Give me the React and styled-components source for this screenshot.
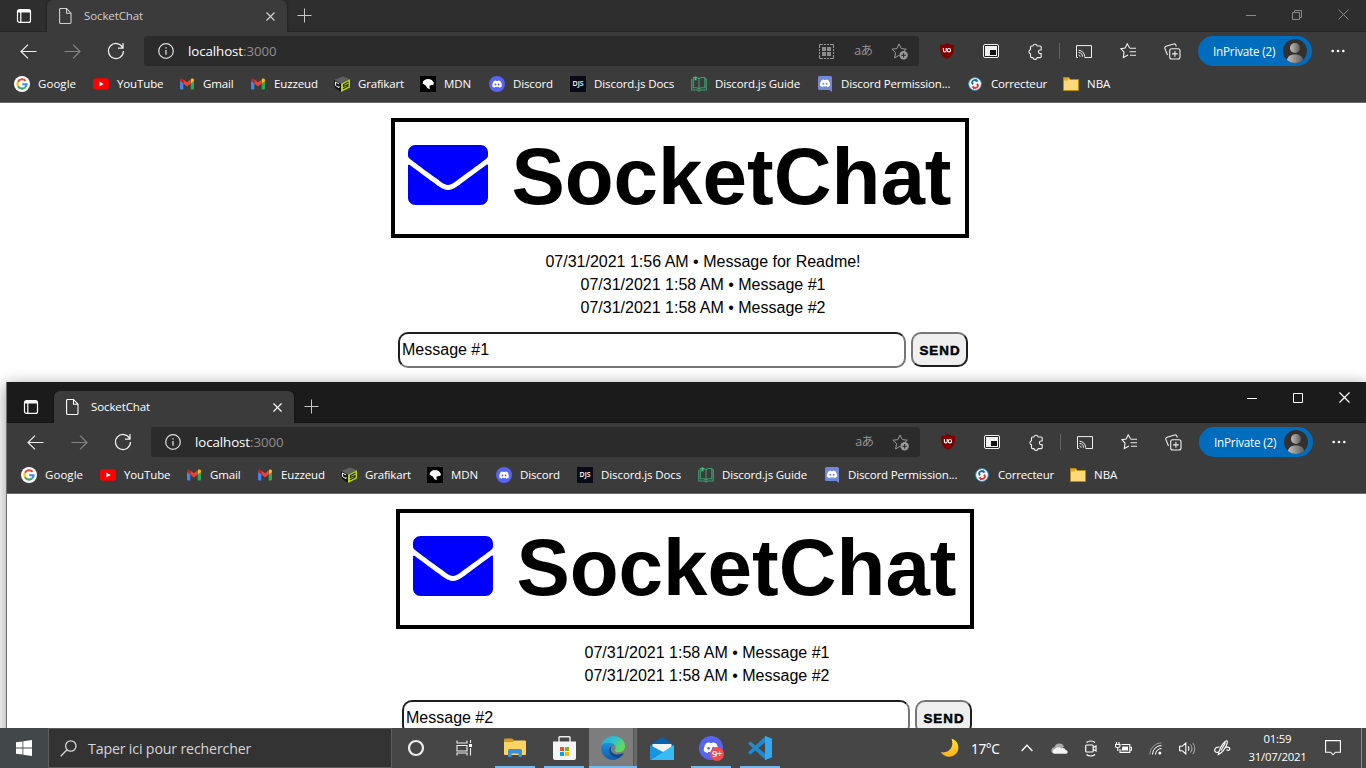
import React from "react";
import styled, { createGlobalStyle, css } from "styled-components";

const GlobalStyle = createGlobalStyle`
  * { box-sizing: border-box; }
  body { margin: 0; background: #fff; overflow: hidden; }
  svg { display: block; flex: none; }
`;

const uiFont = css`
  font-family: "Open Sans", "Noto Sans", "Noto Sans CJK JP", sans-serif;
`;

/* ---------- desktop ---------- */

const Desktop = styled.div`
  position: relative;
  width: 1366px;
  height: 768px;
  overflow: hidden;
  background: #fff;
`;

const Window = styled.section`
  position: absolute;
  left: ${(p) => p.$x}px;
  top: ${(p) => p.$y}px;
  width: ${(p) => p.$w}px;
  height: 768px;
  display: flex;
  flex-direction: column;
  background: #fff;
  ${(p) =>
    p.$floating &&
    css`
      border-left: 1px solid #6f6f6f;
      box-shadow: 0 3px 15px rgba(0, 0, 0, 0.42);
    `}
`;

/* ---------- browser chrome ---------- */

const TabStrip = styled.div`
  ${uiFont}
  display: flex;
  align-items: flex-end;
  height: ${(p) => (p.$floating ? 41 : 32)}px;
  background: ${(p) => (p.$floating ? "#1b1b1b" : "#2e2e2e")};
  border-bottom: 1px solid ${(p) => (p.$floating ? "#151515" : "#262626")};
  flex: none;
`;

const StripButton = styled.div`
  display: flex;
  align-items: center;
  justify-content: center;
  width: ${(p) => p.$w}px;
  height: 31px;
`;

const Tab = styled.div`
  display: flex;
  align-items: center;
  width: 240px;
  height: 32px;
  margin-bottom: -1px;
  padding: 0 12px;
  border-radius: 6px 6px 0 0;
  background: #3b3b3b;
  box-shadow: 0 0 3px rgba(0, 0, 0, 0.5);
  clip-path: inset(0 -4px 0 -4px);
  color: ${(p) => (p.$active ? "#fff" : "#d0d0d0")};
`;

const TabTitle = styled.span`
  flex: 1;
  margin-left: 12px;
  font-size: 11.5px;
  line-height: 16px;
  letter-spacing: -0.1px;
`;

const WindowControls = styled.div`
  display: flex;
  align-self: flex-start;
  margin-left: auto;
  color: ${(p) => (p.$active ? "#fff" : "#8a8a8a")};
`;

const ControlButton = styled.div`
  display: flex;
  align-items: center;
  justify-content: center;
  width: 46px;
  height: ${(p) => (p.$active ? 31 : 29)}px;
`;

const Toolbar = styled.div`
  ${uiFont}
  display: flex;
  align-items: center;
  height: 38px;
  padding: 0 6px;
  background: #3b3b3b;
  color: #f0f0f0;
  flex: none;
`;

const Slot = styled.div`
  display: flex;
  align-items: center;
  justify-content: center;
  width: 44px;
  height: 30px;
  color: ${(p) => (p.$dim ? "#858585" : "inherit")};
`;

const AddressBar = styled.div`
  display: flex;
  align-items: center;
  flex: 1;
  height: 30px;
  margin: 0 6px;
  padding: 0 1px 0 14px;
  border-radius: 3px;
  background: #2b2b2b;
`;

const Url = styled.span`
  flex: 1;
  margin-left: 14px;
  font-size: 13.3px;
  line-height: 20px;
  letter-spacing: -0.08px;
  color: #8e8e8e;

  b {
    font-weight: 400;
    color: #fff;
  }
`;

const AddressAction = styled.div`
  display: flex;
  align-items: center;
  justify-content: center;
  width: 36.5px;
  font-size: 12.5px;
  line-height: 18px;
  letter-spacing: -0.8px;
  color: #929292;
`;

const Divider = styled.div`
  width: 1px;
  height: 16px;
  margin: 0 2px;
  background: #636363;
`;

const ProfilePill = styled.div`
  display: flex;
  align-items: center;
  justify-content: space-between;
  width: 114px;
  height: 30px;
  margin: 0 4px;
  padding: 0 5px 0 15px;
  border-radius: 15px;
  background: #006cbe;
  color: #fff;
  font-size: 11.7px;
  letter-spacing: -0.2px;
  white-space: nowrap;
`;

const BookmarkBar = styled.div`
  ${uiFont}
  display: flex;
  align-items: center;
  height: 33px;
  padding: 0 0 4px 14px;
  background: #3b3b3b;
  border-bottom: 1px solid #6b6b6b;
  color: #fff;
  flex: none;
`;

const Bookmark = styled.div`
  display: flex;
  align-items: center;
  gap: 8px;
  width: ${(p) => p.$w}px;
  font-size: 11.5px;
  line-height: 16px;
  letter-spacing: ${(p) => p.$ls ?? -0.13}px;
  white-space: nowrap;
`;

/* ---------- chat page ---------- */

const Page = styled.main`
  display: flex;
  flex-direction: column;
  align-items: center;
  padding-top: 15px;
  font-family: "Liberation Sans", Arial, sans-serif;
  color: #000;
`;

const Logo = styled.h1`
  display: flex;
  align-items: flex-start;
  width: 578px;
  height: 120px;
  margin: 0 ${(p) => p.$shift}px 12px 0;
  padding: 9px 0 0 13.4px;
  border: 4px solid #000;
  font-size: 80px;
  line-height: 92px;
  font-weight: 700;

  svg {
    margin: 14px 23px 0 0;
  }
`;

const Messages = styled.ul`
  margin: 0 0 13px;
  padding: 0 0 0 40px;
  list-style: none;
  text-align: center;
  font-size: 16px;
  line-height: 23px;
`;

const Form = styled.form`
  display: flex;
  align-items: flex-start;
  gap: 5px;
`;

const Input = styled.input`
  width: 508px;
  height: 36px;
  padding: 1px 2px;
  border: 2px solid;
  border-color: #1e1e1e #767676 #767676 #1e1e1e;
  border-radius: 10px;
  outline: none;
  background: #fff;
  color: #000;
  font: 16px "Liberation Sans", Arial, sans-serif;
`;

const SendButton = styled.button`
  width: 57px;
  height: 35px;
  padding: 1px 0 0 1px;
  border: 2px solid;
  border-color: #767676 #1e1e1e #1e1e1e #767676;
  border-radius: 10px;
  background: #efefef;
  color: #000;
  font: 700 13.333px "Liberation Sans", Arial, sans-serif;
  letter-spacing: 1px;
  -webkit-text-stroke: 0.5px #000;
`;

/* ---------- taskbar ---------- */

const Taskbar = styled.footer`
  ${uiFont}
  position: absolute;
  left: 0;
  right: 0;
  bottom: 0;
  display: flex;
  height: 40px;
  background: #464646;
  color: #fff;
`;

const StartButton = styled.div`
  display: flex;
  align-items: center;
  justify-content: center;
  width: 48px;
  background: #42474a;
`;

const SearchBox = styled.div`
  display: flex;
  align-items: center;
  gap: 11px;
  width: 344px;
  padding-left: 11px;
  border: 1px solid #5c5c5c;
  background: #333;
  color: #d6d6d6;
  font-size: 14.2px;
  letter-spacing: -0.16px;
`;

const TaskSlot = styled.div`
  display: flex;
  align-items: center;
  justify-content: center;
  width: 48px;
`;

const Apps = styled.div`
  display: flex;
  gap: 1px;
  margin-left: 3px;
`;

const AppButton = styled.div`
  position: relative;
  display: flex;
  align-items: center;
  justify-content: center;
  width: 48px;
  padding-right: ${(p) => (p.$active ? 1 : 0)}px;
  background: ${(p) => (p.$active ? "linear-gradient(90deg, #7d7d7d 44px, #555 44px, #555 45px, #696969 45px)" : "none")};

  &::after {
    content: "";
    display: ${(p) => (p.$open ? "block" : "none")};
    position: absolute;
    bottom: 0;
    left: ${(p) => (p.$active ? 0 : 4)}px;
    right: ${(p) => (p.$active ? 0 : 4)}px;
    height: 2px;
    background: #76b9ed;
  }
`;

const Badge = styled.span`
  position: absolute;
  right: 11px;
  top: 19px;
  width: 14px;
  height: 14px;
  border-radius: 50%;
  background: #ed4c50;
  font-size: 9.5px;
  font-weight: 600;
  line-height: 13px;
  letter-spacing: -0.5px;
  text-align: center;
`;

const Tray = styled.div`
  display: flex;
  align-items: center;
  margin-left: auto;
`;

const Weather = styled.div`
  display: flex;
  align-items: center;
  gap: 10px;
  width: 71px;
  font-family: "Noto Sans", sans-serif;
  font-size: 13.6px;
  letter-spacing: -0.4px;
`;

const TrayItem = styled.div`
  display: flex;
  align-items: center;
  justify-content: center;
  width: ${(p) => p.$w || 32}px;
`;

const Clock = styled.div`
  width: 73px;
  text-align: center;
  font-size: 11.4px;
  line-height: 18px;
  letter-spacing: -0.25px;
`;

const ShowDesktop = styled.div`
  width: 5px;
  height: 40px;
  margin-left: 9px;
  border-left: 1px solid #8a8a8a;
`;

/* ---------- icons ---------- */

const Line = ({ size = 16, w = size, h = size, sw = 1, children, ...rest }) => (
  <svg width={w} height={h} viewBox={`0 0 ${w} ${h}`} fill="none" stroke="currentColor" strokeWidth={sw} {...rest}>
    {children}
  </svg>
);

const TabActionsIcon = () => (
  <Line color="#fff">
    <rect x="1.5" y="1.6" width="13" height="12.8" rx="2" strokeWidth="1.2" />
    <path d="M4.8 4v10.4" strokeWidth="1.2" />
    <path d="M2 3.2h12" strokeWidth="2.6" />
  </Line>
);
const PageIcon = () => (
  <Line w={13} h={16}>
    <path d="M1.5.5h6l4.500 4.600v9.200a1.200 1.200 0 0 1-1.200 1.200H1.800A1.200 1.200 0 0 1 .6 14.300V1.500a1 1 0 0 1 .9-1zM7.500.8v4.500h4.300" strokeWidth="1.100" />
  </Line>
);
const CrossIcon = ({ size = 9, sw = 1.2 }) => (
  <Line size={size} sw={sw}>
    <path d={`M.5.5l${size - 1} ${size - 1}M${size - 0.5}.5l-${size - 1} ${size - 1}`} />
  </Line>
);
const PlusIcon = () => (
  <Line size={15} color="#c8c8c8"><path d="M7.500.5v14M.5 7.500h14" /></Line>
);
const ArrowIcon = ({ flip }) => (
  <Line w={17} h={15} sw="1.15" transform={flip ? "scale(-1 1)" : undefined}>
    <path d="M16.500 7.500H1M8 .7L1 7.500l7 6.800" />
  </Line>
);
const ReloadIcon = () => (
  <Line size={18} sw="1.25"><path d="M15.600 5.400A7.500 7.500 0 1 0 16.500 9M16 1v5h-5" /></Line>
);
const InfoIcon = () => (
  <Line sw="1.2" color="#ddd">
    <circle cx="8" cy="8" r="7.300" />
    <path d="M8 7v4.800M8 4.200v1.400" strokeWidth="1.300" />
  </Line>
);
const QrIcon = () => (
  <Line size={15} color="#999">
    <path d="M.5 4V.5H4M11 .5h3.500V4M14.500 11v3.500H11M4 14.500H.5V11" />
    <path d="M3 3h4v4H3zM8 3h4v4H8zM3 8h4v4H3zM8 8h4v4H8z" fill="#8c8c8c" stroke="none" />
    <path d="M5 .5h5M5 14.500h5M.5 5v5M14.500 5v5" strokeDasharray="2 1" />
  </Line>
);
const StarAddIcon = () => (
  <Line w={18} h={17} color="#999">
    <path d="M12.500 8.600l2.800-2.400-5-.6L8 .9 5.900 5.600l-5 .6 3.700 3.500-1 5.300L8 12.300" />
    <circle cx="12.600" cy="12.300" r="4.200" fill="#999" stroke="none" />
    <path d="M12.600 10v4.600M10.300 12.300h4.600" stroke="#2b2b2b" />
  </Line>
);
const ShieldIcon = () => (
  <svg width="14" height="16" viewBox="0 0 14 16">
    <path d="M7 0c2 1.300 4.200 1.900 7 1.900 0 7.500-.6 10.600-7 14.100C.6 12.500 0 9.400 0 1.900 2.800 1.900 5 1.300 7 0z" fill="#800000" />
    <path d="M3.400 5v2.500a1.400 1.400 0 0 0 2.800 0V5" fill="none" stroke="#fff" strokeWidth="1.100" />
    <circle cx="8.900" cy="7.200" r="1.700" fill="none" stroke="#fff" strokeWidth="1.100" />
  </svg>
);
const PipIcon = () => (
  <svg width="16" height="14" viewBox="0 0 16 14">
    <rect x=".5" y=".5" width="15" height="13" rx="1.500" fill="#222" stroke="#f0f0f0" />
    <rect x="2" y="2" width="12" height="10" fill="#f0f0f0" />
    <rect x="7" y="6" width="6" height="5" fill="#111" />
  </svg>
);
const PuzzleIcon = () => (
  <Line w={16} h={17} sw="1.100">
    <path d="M4.500 3h1.400a2.200 2.200 0 0 1 4.300 0h3a1 1 0 0 1 1 1v3h-1a1.800 1.800 0 0 0 0 3.600h1v3a1 1 0 0 1-1 1h-3a2.200 2.200 0 0 1-4.300 0H4.500a1 1 0 0 1-1-1v-2.900a2 2 0 0 1 0-3.900V4a1 1 0 0 1 1-1z" />
  </Line>
);
const CastIcon = () => (
  <Line w={16} h={13}>
    <path d="M.5 12.500V.6h15v11.900H8.500M.5 12.500H2" />
    <path d="M2.500 5.200a6.500 6.500 0 0 1 6.200 6.500M2.500 7.500a4.200 4.200 0 0 1 4 4.200M2.500 9.900a2 2 0 0 1 1.700 1.800" />
  </Line>
);
const FavoritesIcon = () => (
  <Line w={17} h={16} sw="1.100">
    <path d="M9.500 4.700L7.200.8 5.200 5 .9 5.700 4 9l-.7 5.600L8 12M9.500 5.200H16M9.500 8.700H16M10 12.200h6" />
  </Line>
);
const CollectionsIcon = () => (
  <Line w={17} h={17} sw="1.100">
    <rect x="5.700" y="5.700" width="10.300" height="10.300" rx="2" />
    <path d="M10.900 8v5.700M8 10.900h5.700M12.300 3.500l-.4-1.400a1.800 1.800 0 0 0-2.300-1L2 3.300A1.800 1.800 0 0 0 .9 5.600L3.500 12" />
  </Line>
);
const DotsIcon = () => (
  <svg width="14" height="4" viewBox="0 0 14 4" fill="#fff">
    <circle cx="1.700" cy="2" r="1.300" /><circle cx="7" cy="2" r="1.300" /><circle cx="12.300" cy="2" r="1.300" />
  </svg>
);
const Avatar = () => (
  <svg width="24" height="24" viewBox="0 0 24 24">
    <defs>
      <linearGradient id="person"><stop offset="0" stopColor="#c4c2c0" /><stop offset="1" stopColor="#5d5a58" /></linearGradient>
      <clipPath id="disc"><circle cx="12" cy="12" r="12" /></clipPath>
    </defs>
    <circle cx="12" cy="12" r="12" fill="#323130" />
    <g clipPath="url(#disc)" fill="url(#person)">
      <circle cx="12" cy="9" r="5" />
      <path d="M3.500 24c0-6 3-8.500 8.500-8.500s8.500 2 8.500 8.500z" />
    </g>
  </svg>
);
const MinimizeIcon = () => <Line size={10}><path d="M0 5.500h10" /></Line>;
const MaximizeIcon = () => <Line size={10}><path d="M.5.5h9v9h-9z" /></Line>;
const RestoreIcon = () => <Line size={10}><path d="M.5 2.500h7v7h-7zM2.500 2.500v-2h7v7h-2" /></Line>;

/* bookmark favicons */
const GoogleIcon = () => (
  <svg width="16" height="16" viewBox="0 0 16 16">
    <circle cx="8" cy="8" r="8" fill="#fff" />
    <g fill="none" strokeWidth="2.100">
      <path d="M11.600 4.900A4.600 4.600 0 0 0 4 5.700" stroke="#ea4335" />
      <path d="M4 5.700a4.800 4.800 0 0 0 0 4.600" stroke="#fbbc05" />
      <path d="M4 10.300a4.600 4.600 0 0 0 7 1.200" stroke="#34a853" />
      <path d="M8.200 8.200h4.400a4.600 4.600 0 0 1-1.600 3.300" stroke="#4285f4" />
    </g>
  </svg>
);
const YouTubeIcon = () => (
  <svg width="16" height="16" viewBox="0 0 16 16">
    <rect y="2.300" width="16" height="11.400" rx="3" fill="#f00" /><path d="M6.400 5.600v4.800L10.600 8z" fill="#fff" />
  </svg>
);
const GmailIcon = () => (
  <svg width="16" height="16" viewBox="0 0 16 16">
    <path d="M1 4v8.500a1 1 0 0 0 1 1h2.300V7z" fill="#4285f4" />
    <path d="M15 4v8.500a1 1 0 0 1-1 1h-2.300V7z" fill="#34a853" />
    <path d="M11.700 3.800V7.600L15 5.100V4c0-1.700-1.800-2-2.700-1.200z" fill="#fbbc04" />
    <path d="M4.300 7.600V3.500L8 6.300l3.700-2.800v4.100L8 10.400z" fill="#ea4335" />
    <path d="M1 4v1.100l3.300 2.500V3.500l-.9-.7C2.500 2 1 2.600 1 4z" fill="#c5221f" />
  </svg>
);
const GrafikartIcon = () => (
  <svg width="16" height="16" viewBox="0 0 16 16">
    <path d="M0 4L9 .5l7 2.700-9 4.600z" fill="#606060" /><path d="M0 4l7 3.800V16l-6-4z" fill="#151515" />
    <path d="M7 7.800l9-4.600v8.300L7 16z" fill="#b6d60b" />
    <path d="M1.200 6l4 2M1.500 6v3.500l3.500 2.200v-1.700" stroke="#eee" fill="none" />
    <path d="M14.500 6l-5 2.500v2l4.500-2v1.700L9 12.800" stroke="#222" fill="none" strokeWidth="1.100" />
  </svg>
);
const MdnIcon = () => (
  <svg width="16" height="16" viewBox="0 0 16 16">
    <rect width="16" height="16" fill="#000" />
    <path d="M2.500 7.500l.8-2.600L6 3.200l3-.3 2.800 1.200 1.900 2.500v1.800l-2.700.8-1.600.6.400 3.400-2.300-1L5.700 9.500z" fill="#fff" />
  </svg>
);
const DiscordGlyph = ({ x = 0, y = 0, scale = 1 }) => (
  <path
    transform={`translate(${x} ${y}) scale(${scale})`}
    fillRule="evenodd"
    fill="#fff"
    d="M8.500 1A17 17 0 0 0 4 2.400C1.200 6.300.4 10.200.8 14a17 17 0 0 0 5.200 2.700l1.200-2c2.500.7 5.100.7 7.600 0l1.200 2A17 17 0 0 0 21.200 14c.5-4.500-.7-8.300-3.200-11.600A17 17 0 0 0 13.500 1l-.6 1.200a14 14 0 0 0-3.800 0zM7.600 7.700a2 2 0 1 1 0 4 2 2 0 0 1 0-4zm6.800 0a2 2 0 1 1 0 4 2 2 0 0 1 0-4z"
  />
);
const DiscordIcon = () => (
  <svg width="16" height="16" viewBox="0 0 16 16">
    <circle cx="8" cy="8" r="8" fill="#5865f2" /><DiscordGlyph x={3} y={4} scale={0.46} />
  </svg>
);
const DjsBadge = styled.span`
  width: 16px;
  height: 16px;
  background: #090a16;
  color: #fff;
  font-size: 7px;
  font-weight: 600;
  line-height: 16px;
  text-align: center;
  letter-spacing: -0.1px;
`;
const GuideIcon = () => (
  <svg width="16" height="16" viewBox="0 0 16 16" fill="none" stroke="#3f9a72" strokeWidth="1.100">
    <path d="M2.300 1.500v10.300H6l2 1.200 2-1.200h3.800V1.500H10L8 2.700 6 1.500zM8 2.700V13M.7 3v11h5.800l1.500 1 1.500-1h5.800V3H14" />
    <path d="M3.500.5h2v4.300l-1-.8-1 .8z" fill="#48c08c" stroke="none" />
  </svg>
);
const PermissionIcon = () => (
  <svg width="14" height="16" viewBox="0 0 14 16">
    <path d="M1.500 0h11A1.500 1.500 0 0 1 14 1.500V16l-2.700-2H1.500A1.500 1.500 0 0 1 0 12.500v-11A1.500 1.500 0 0 1 1.500 0z" fill="#7289da" />
    <DiscordGlyph x={1.6} y={3} scale={0.49} />
  </svg>
);
const CorrecteurIcon = () => (
  <svg width="14" height="14" viewBox="0 0 14 14">
    <circle cx="7" cy="7" r="6.400" fill="#fff" stroke="#2a83b5" strokeWidth="1" />
    <path d="M8.600 3.500A3 3 0 0 0 4.300 4.600a2 2 0 0 0 .9 2.500" stroke="#176fa5" strokeWidth="1.900" fill="none" />
    <path d="M5.400 10.500A3 3 0 0 0 9.700 9.400a2 2 0 0 0-.9-2.500" stroke="#e33333" strokeWidth="1.900" fill="none" />
    <path d="M8 1.700l2.700 2.500-3 1z" fill="#176fa5" /><path d="M6 12.300L3.300 9.800l3-1z" fill="#e33333" />
  </svg>
);
const FolderIcon = () => (
  <svg width="16" height="14" viewBox="0 0 16 14">
    <path d="M.5 13.500V.5H6l1 2h8.500v11z" fill="#ffd978" stroke="#b78a12" />
    <path d="M1 1h4.800L5 3.500H1z" fill="#e2ac22" />
  </svg>
);

/* page logo */
const EnvelopeIcon = () => (
  <svg width="80" height="60" viewBox="0 64 512 384" fill="#00f">
    <path d="M502.300 190.800c3.900-3.100 9.700-.2 9.700 4.700V400c0 26.500-21.500 48-48 48H48c-26.500 0-48-21.500-48-48V195.600c0-5 5.700-7.800 9.700-4.700 22.400 17.400 52.100 39.500 154.100 113.600 21.100 15.400 56.700 47.800 92.200 47.600 35.700.3 72-32.800 92.300-47.600 102-74.100 131.600-96.300 154-113.700zM256 320c23.200.4 56.600-29.200 73.400-41.400 132.700-96.300 142.800-104.700 173.400-128.700 5.800-4.500 9.200-11.500 9.200-18.900v-19c0-26.500-21.500-48-48-48H48c-26.500 0-48 21.500-48 48v19c0 7.400 3.400 14.300 9.200 18.900 30.600 23.900 40.700 32.400 173.400 128.700 16.800 12.200 50.200 41.800 73.400 41.400z" />
  </svg>
);

/* taskbar icons */
const WindowsIcon = () => (
  <svg width="16" height="16" viewBox="0 0 16 16" fill="#fff">
    <path d="M0 2.300l6.500-.9v6.200H0zM7.300 1.300L16 0v7.600H7.300zM0 8.400h6.500v6.200L0 13.700zM7.300 8.400H16V16l-8.700-1.300z" />
  </svg>
);
const SearchIcon = () => (
  <Line size={17} sw="1.300"><circle cx="10.800" cy="6" r="5.200" /><path d="M7 9.800L.7 16.200" /></Line>
);
const CortanaIcon = () => <Line size={18} sw="2.200" color="#eee"><circle cx="9" cy="9" r="7" /></Line>;
const TaskViewIcon = () => (
  <Line w={17} h={16} color="#eee" sw="1.100">
    <path d="M1 .5V3h10V.5M1 5.500h10v5.500H1zM1 15.500V13h10v2.500M14.500 0v3M14.500 8v7.500" />
    <path d="M13 4h3v3h-3z" fill="#fff" stroke="none" />
  </Line>
);
const ExplorerIcon = () => (
  <svg width="22" height="20" viewBox="0 0 22 20">
    <path d="M0 1.500A1 1 0 0 1 1 .5h7l2 1.500v3H0z" fill="#d99a1e" />
    <path d="M0 4h9l1.500-1.500H21a1 1 0 0 1 1 1V16a1 1 0 0 1-1 1H1a1 1 0 0 1-1-1z" fill="#ffd264" />
    <path d="M4 19v-6.500A1.500 1.500 0 0 1 5.500 11h11a1.500 1.500 0 0 1 1.500 1.500V19h-3.500v-3.500h-7V19z" fill="#3d8fd8" />
  </svg>
);
const StoreIcon = () => (
  <svg width="23" height="24" viewBox="0 0 23 24">
    <path d="M6 6V1.500A1 1 0 0 1 7 .7h9a1 1 0 0 1 1 .8V6" fill="none" stroke="#eee" strokeWidth="1.400" />
    <path d="M0 5.500h23V22a2 2 0 0 1-2 2H2a2 2 0 0 1-2-2z" fill="#f5f5f5" />
    <path d="M7 11h4v4H7z" fill="#f25022" /><path d="M12 11h4v4h-4z" fill="#7fba00" />
    <path d="M7 16h4v4H7z" fill="#00a4ef" /><path d="M12 16h4v4h-4z" fill="#ffb900" />
  </svg>
);
const EdgeIcon = () => (
  <svg width="24" height="24" viewBox="0 0 24 24">
    <defs>
      <linearGradient id="edgeTop" y2=".5"><stop offset="0" stopColor="#1fa7dd" /><stop offset=".55" stopColor="#35c1c8" /><stop offset="1" stopColor="#5fdd52" /></linearGradient>
      <linearGradient id="edgeLow" x2="0" y2="1"><stop offset="0" stopColor="#1b91dc" /><stop offset="1" stopColor="#0f5cae" /></linearGradient>
    </defs>
    <path d="M.2 10.500C1 4.300 6 0 12 0c7 0 12 4.800 12 10.200 0 3.800-2.900 6-6.300 6-3 0-4-1-4-1.800 0-.7 1-1.100 1-3 0-2.400-2.600-4.500-6.500-4.500-4 0-7 1.600-8 3.600z" fill="url(#edgeTop)" />
    <path d="M.2 10.500C1.200 8 4.200 6.600 8.200 6.900c2.500.2 4.500 1.300 5.500 2.800-3-1-5.600 1.200-5.600 4.600 0 4.700 4.400 8 9.900 7.600-5 3.600-12.500 2.500-16-3.300A12 12 0 0 1 .2 10.500z" fill="url(#edgeLow)" />
    <path d="M10.600 10.200c-1.900 1-2.500 2.700-2.500 4.100 0 4.700 4.400 8 9.900 7.600a12 12 0 0 0 4.400-4c.4-.6-.1-.9-.6-.6-5.500 2.600-11.800.4-12-3.600 0-1.500.3-2.700.8-3.500z" fill="#0b4a8f" />
  </svg>
);
const MailIcon = () => (
  <svg width="24" height="23" viewBox="0 0 24 23">
    <path d="M0 8L12 0l12 8v3H0z" fill="#0863ae" />
    <path d="M2.500 7h19v8h-19z" fill="#f2f2f2" />
    <path d="M24 8v15H0z" fill="#37bbf5" /><path d="M0 8l13 6.900L0 23z" fill="#1996e0" />
  </svg>
);
const DiscordAppIcon = () => (
  <svg width="24" height="24" viewBox="0 0 24 24">
    <circle cx="12" cy="12" r="12" fill="#5865f2" /><DiscordGlyph x={4.3} y={5.5} scale={0.7} />
  </svg>
);
const VsCodeIcon = () => (
  <svg width="24" height="24" viewBox="0 0 24 24">
    <path d="M17 6.500L2.500 18.500.5 17.300a.8.8 0 0 1 0-1.200L17.500.2z" fill="#1c8ad0" />
    <path d="M17 17.500L2.500 5.500.5 6.700a.8.8 0 0 0 0 1.200l17 15.900z" fill="#2489ca" />
    <path d="M17.500 0L24 2.800v18.400L17.500 24c-.6 0-1-.5-.5-1.200V1.200c-.4-.5 0-1.100.5-1.200z" fill="#35a7ee" />
  </svg>
);
const MoonIcon = () => (
  <svg width="21" height="20" viewBox="0 0 21 20">
    <defs><linearGradient id="moon" x2="0" y2="1"><stop offset="0" stopColor="#ffe32e" /><stop offset="1" stopColor="#ffb31a" /></linearGradient></defs>
    <path d="M11.500.8c5 1.400 7.500 5.500 6.800 10.200-1 6.500-8.300 9.500-13.800 6.500-1.500-.8-2.900-2-3.700-3.400 3.800.9 7.700-.3 9.800-3.300 2-2.900 2.200-6.500.9-10z" fill="url(#moon)" />
  </svg>
);
const CaretIcon = () => <Line w={12} h={8} sw="1.300"><path d="M.6 7L6 1.200 11.400 7" /></Line>;
const CloudIcon = () => (
  <svg width="17" height="11" viewBox="0 0 17 11">
    <path d="M1.500 10A3.300 3.300 0 0 1 3.500 4.200 5 5 0 0 1 13 3.700l-8 6.300z" fill="#aaa" />
    <path d="M3 10.700a2.500 2.500 0 0 1 1-4.700c1.500-2 4.500-2.500 6.500-.6 2-.8 3.600.1 4 1.500 2.600 0 3 3.500.5 3.800z" fill="#f3f3f3" />
  </svg>
);
const MeetIcon = () => (
  <Line w={12} h={17} sw="1.200">
    <rect x=".7" y="5" width="7.500" height="7" rx="1" /><path d="M8.200 7.500L11 6v5l-2.800-1.500M1.500 2.500c2-2 6.500-2 8.500 0M1.500 14.500c2 2 6.500 2 8.500 0" />
  </Line>
);
const BatteryIcon = () => (
  <Line w={17} h={12} sw="1.100">
    <path d="M1.500 0v2.500M4 0v2.500M.5 2.500h4.500v1.800c0 1.600-4.500 1.600-4.500 0zM2.800 5.500v3.500M6.500 2.500h8.300v7.900H5V7M15 5.200h1.500v3H15" />
    <path d="M7.500 4.500h5.500v4H6.500z" fill="#fff" stroke="none" />
  </Line>
);
const WifiIcon = () => (
  <Line size={13}>
    <path d="M.7 12.500A12 12 0 0 1 12.500.8" opacity=".45" />
    <path d="M3.500 12.500a9 9 0 0 1 9-9M6.500 12.500a6 6 0 0 1 6-6" />
    <circle cx="10.800" cy="11" r="1.500" fill="#fff" stroke="none" />
  </Line>
);
const VolumeIcon = () => (
  <Line w={17} h={13} sw="1.100">
    <path d="M.6 4.300h2.600L6.800 1v11L3.200 8.700H.6zM9 4.300c1 1.200 1 3.200 0 4.400" />
    <path d="M11.300 2.500c2 2.400 2 5.600 0 8M13.800 1c2.600 3.200 2.600 7.800 0 11" opacity=".5" />
  </Line>
);
const PenIcon = () => (
  <Line w={17} h={16} sw="1.200">
    <path d="M13 .8c-1.600-.7-6.700 5.500-8 10.800l-.7 3 2.500-1.500C10.500 10 14.500 2.500 13 .8zM11.500 2.500L7 10.500M5.500 7C2.500 7 .7 8.700.7 10.500S3 13 4.800 12M10.500 8.200c2.200-2 5.300-1 5.300.8 0 1.500-2.300 1.700-3.300.8" />
  </Line>
);
const NotificationIcon = () => (
  <Line w={16} h={16} sw="1.100"><path d="M.6.6h14.800v11.600h-5L8 14.800l-2.400-2.600h-5z" /></Line>
);

/* ---------- composition ---------- */

const bookmarks = [
  { label: "Google", w: 79, ls: 0.05, icon: <GoogleIcon /> },
  { label: "YouTube", w: 86, icon: <YouTubeIcon /> },
  { label: "Gmail", w: 71, icon: <GmailIcon /> },
  { label: "Euzzeud", w: 84, icon: <GmailIcon /> },
  { label: "Grafikart", w: 86, ls: -0.18, icon: <GrafikartIcon /> },
  { label: "MDN", w: 69, icon: <MdnIcon /> },
  { label: "Discord", w: 81, icon: <DiscordIcon /> },
  { label: "Discord.js Docs", w: 121, ls: -0.09, icon: <DjsBadge>DJS</DjsBadge> },
  { label: "Discord.js Guide", w: 126, icon: <GuideIcon /> },
  { label: "Discord Permission...", w: 150, ls: -0.15, icon: <PermissionIcon /> },
  { label: "Correcteur", w: 96, ls: -0.18, icon: <CorrecteurIcon /> },
  { label: "NBA", w: 60, ls: 0, icon: <FolderIcon /> },
];

const FaviconBox = styled.span`
  display: flex;
  align-items: center;
  justify-content: center;
  width: 16px;
  flex: none;
`;

function Browser({ x, y, w, floating, showQr, logoShift, messages, draft }) {
  return (
    <Window $x={x} $y={y} $w={w} $floating={floating}>
      <TabStrip $floating={floating}>
        <StripButton $w={47}><TabActionsIcon /></StripButton>
        <Tab $active={floating}>
          <PageIcon />
          <TabTitle>SocketChat</TabTitle>
          <CrossIcon />
        </Tab>
        <StripButton $w={35}><PlusIcon /></StripButton>
        <WindowControls $active={floating}>
          <ControlButton $active={floating}><MinimizeIcon /></ControlButton>
          <ControlButton $active={floating}>{floating ? <MaximizeIcon /> : <RestoreIcon />}</ControlButton>
          <ControlButton $active={floating}><CrossIcon size={11} sw={floating ? 1.3 : 1} /></ControlButton>
        </WindowControls>
      </TabStrip>
      <Toolbar>
        <Slot><ArrowIcon /></Slot>
        <Slot $dim><ArrowIcon flip /></Slot>
        <Slot><ReloadIcon /></Slot>
        <AddressBar>
          <InfoIcon />
          <Url><b>localhost</b>:3000</Url>
          {showQr && <AddressAction><QrIcon /></AddressAction>}
          <AddressAction>aあ</AddressAction>
          <AddressAction><StarAddIcon /></AddressAction>
        </AddressBar>
        <Slot><ShieldIcon /></Slot>
        <Slot><PipIcon /></Slot>
        <Slot><PuzzleIcon /></Slot>
        <Divider />
        <Slot><CastIcon /></Slot>
        <Slot><FavoritesIcon /></Slot>
        <Slot><CollectionsIcon /></Slot>
        <ProfilePill>InPrivate (2)<Avatar /></ProfilePill>
        <Slot><DotsIcon /></Slot>
      </Toolbar>
      <BookmarkBar>
        {bookmarks.map((b) => (
          <Bookmark key={b.label} $w={b.w} $ls={b.ls}>
            <FaviconBox>{b.icon}</FaviconBox>
            {b.label}
          </Bookmark>
        ))}
      </BookmarkBar>
      <Page>
        <Logo $shift={logoShift}><EnvelopeIcon />SocketChat</Logo>
        <Messages>
          {messages.map((m) => <li key={m}>{m}</li>)}
        </Messages>
        <Form>
          <Input defaultValue={draft} />
          <SendButton type="button">SEND</SendButton>
        </Form>
      </Page>
    </Window>
  );
}

export default function App() {
  return (
    <Desktop>
      <GlobalStyle />
      <Browser
        x={0} y={0} w={1366} showQr logoShift={6} draft="Message #1"
        messages={[
          "07/31/2021 1:56 AM • Message for Readme!",
          "07/31/2021 1:58 AM • Message #1",
          "07/31/2021 1:58 AM • Message #2",
        ]}
      />
      <Browser
        x={6} y={382} w={1361} floating logoShift={4} draft="Message #2"
        messages={["07/31/2021 1:58 AM • Message #1", "07/31/2021 1:58 AM • Message #2"]}
      />
      <Taskbar>
        <StartButton><WindowsIcon /></StartButton>
        <SearchBox><SearchIcon />Taper ici pour rechercher</SearchBox>
        <TaskSlot><CortanaIcon /></TaskSlot>
        <TaskSlot><TaskViewIcon /></TaskSlot>
        <Apps>
          <AppButton $open><ExplorerIcon /></AppButton>
          <AppButton $open><StoreIcon /></AppButton>
          <AppButton $open $active><EdgeIcon /></AppButton>
          <AppButton><MailIcon /></AppButton>
          <AppButton $open><DiscordAppIcon /><Badge>9+</Badge></AppButton>
          <AppButton $open><VsCodeIcon /></AppButton>
        </Apps>
        <Tray>
          <Weather><MoonIcon />17°C</Weather>
          <TrayItem><CaretIcon /></TrayItem>
          <TrayItem><CloudIcon /></TrayItem>
          <TrayItem><MeetIcon /></TrayItem>
          <TrayItem><BatteryIcon /></TrayItem>
          <TrayItem><WifiIcon /></TrayItem>
          <TrayItem><VolumeIcon /></TrayItem>
          <TrayItem $w={38}><PenIcon /></TrayItem>
          <Clock>01:59<br />31/07/2021</Clock>
          <TrayItem $w={38}><NotificationIcon /></TrayItem>
          <ShowDesktop />
        </Tray>
      </Taskbar>
    </Desktop>
  );
}
